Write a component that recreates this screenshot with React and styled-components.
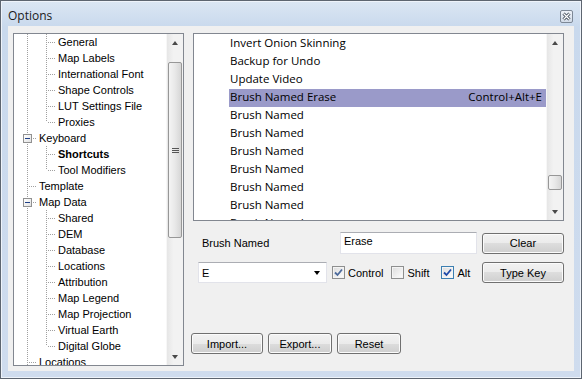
import React from "react";
import styled, { createGlobalStyle, css } from "styled-components";

const GlobalStyle = createGlobalStyle`
  html, body {
    margin: 0;
    padding: 0;
    background: #ffffff;
  }
  body {
    font-family: "Liberation Sans", Arial, sans-serif;
    font-size: 11px;
    color: #000;
  }
`;

const Window = styled.div`
  width: 582px;
  height: 379px;
  box-sizing: border-box;
  border: 1px solid #5d6570;
  background: linear-gradient(to bottom, #dbe6f3 0px, #c9d9ed 26px, #cfdcee 100%);
  box-shadow: inset 1px 1px 0 #eef3fa, inset -1px -1px 0 #eef3fa;
  display: flex;
  flex-direction: column;
  padding: 0 7px 7px 7px;
`;

const TitleBar = styled.div`
  height: 25px;
  display: flex;
  align-items: center;
  justify-content: space-between;
  padding-right: 1px;
`;

const Title = styled.span`
  font-family: "Open Sans", "Noto Sans", sans-serif;
  font-size: 12px;
  color: #1b1b1b;
  padding-top: 4px;
`;

const CloseBox = styled.div`
  width: 13px;
  height: 13px;
  box-sizing: border-box;
  border: 1px solid #7d8896;
  border-radius: 2px;
  background: linear-gradient(to bottom, #eef2f8, #d3dce8);
  display: flex;
  align-items: center;
  justify-content: center;
  margin-top: 6px;
`;

const Client = styled.div`
  flex: 1;
  background: #f0f0f0;
  display: flex;
  padding: 7px 10px 5px 5px;
  gap: 9px;
  min-height: 0;
`;

const TreeBox = styled.div`
  width: 171px;
  box-sizing: border-box;
  border: 1px solid #828790;
  background: #fff;
  display: flex;
  overflow: hidden;
`;

const TreeBody = styled.div`
  flex: 1;
  padding: 0 0 0 4px;
  overflow: hidden;
`;

const TreeRow = styled.div`
  height: 16px;
  display: flex;
  align-items: center;
  white-space: nowrap;
`;

const dots = "#a0a0a0";

const Guide = styled.span`
  position: relative;
  width: 19px;
  height: 16px;
  flex: none;

  ${({ $v }) =>
    $v &&
    css`
      &::before {
        content: "";
        position: absolute;
        left: 9px;
        top: 0;
        width: 1px;
        height: ${$v === "half" ? "8px" : "16px"};
        background-image: linear-gradient(to bottom, ${dots} 50%, transparent 50%);
        background-size: 1px 2px;
      }
    `}

  ${({ $h }) =>
    $h &&
    css`
      &::after {
        content: "";
        position: absolute;
        left: 10px;
        top: 8px;
        width: 9px;
        height: 1px;
        background-image: linear-gradient(to right, transparent 50%, ${dots} 50%);
        background-size: 2px 1px;
      }
    `}
`;

const ExpandBox = styled.span`
  position: absolute;
  left: 5px;
  top: 4px;
  width: 9px;
  height: 9px;
  box-sizing: border-box;
  border: 1px solid #919191;
  background: linear-gradient(to bottom right, #ffffff, #e2e2e2);
  z-index: 1;

  &::after {
    content: "";
    position: absolute;
    left: 1px;
    top: 3px;
    width: 5px;
    height: 1px;
    background: #1f3f86;
  }
`;

const TreeText = styled.span`
  padding-left: 2px;
  font-weight: ${({ $bold }) => ($bold ? "bold" : "normal")};
`;

const ScrollBar = styled.div`
  width: 17px;
  flex: none;
  display: flex;
  flex-direction: column;
  background: linear-gradient(to right, #e6e6e6, #f2f2f2 40%, #f2f2f2);
  border-left: 1px solid #f7f7f7;
  box-sizing: border-box;
`;

const ArrowBtn = styled.div`
  height: 17px;
  flex: none;
  display: flex;
  align-items: center;
  justify-content: center;

  &::after {
    content: "";
    width: 0;
    height: 0;
    border-left: 3.5px solid transparent;
    border-right: 3.5px solid transparent;
    ${({ $down }) =>
      $down
        ? css`border-top: 4px solid #4a4a4a;`
        : css`border-bottom: 4px solid #4a4a4a;`}
  }
`;

const Track = styled.div`
  flex: 1;
  display: flex;
  flex-direction: column;
  padding: 0 1px;
`;

const Thumb = styled.div`
  flex: none;
  margin-top: ${({ $top }) => $top}px;
  height: ${({ $size }) => $size}px;
  box-sizing: border-box;
  border: 1px solid #979797;
  border-radius: 2px;
  background: linear-gradient(to right, #f4f4f4, #e8e8e8 50%, #d6d6d6);
  display: flex;
  align-items: center;
  justify-content: center;
`;

const Grip = styled.span`
  width: 7px;
  height: 5px;
  background-image: linear-gradient(to bottom, #555 1px, transparent 1px);
  background-size: 7px 2px;
`;

const RightPane = styled.div`
  flex: 1;
  display: flex;
  flex-direction: column;
  padding-bottom: 12px;
`;

const ListBox = styled.div`
  height: 188px;
  flex: none;
  box-sizing: border-box;
  border: 1px solid #828790;
  background: #fff;
  display: flex;
  overflow: hidden;
`;

const ListBody = styled.div`
  flex: 1;
  padding: 1px 0 0 35px;
  overflow: hidden;
`;

const ListRow = styled.div`
  height: 18px;
  box-sizing: border-box;
  display: flex;
  align-items: center;
  justify-content: space-between;
  padding: 0 4px 4px 1px;
  font-family: "Open Sans", "Noto Sans", sans-serif;
  font-size: 11.5px;
  white-space: nowrap;
  background: ${({ $selected }) => ($selected ? "#9a9ac9" : "transparent")};
`;

const FormRow = styled.div`
  display: flex;
  align-items: center;
  margin-top: ${({ $mt }) => $mt}px;
  padding-left: ${({ $pl }) => $pl || 0}px;
  gap: ${({ $gap }) => $gap || 0}px;
`;

const ButtonRow = styled.div`
  display: flex;
  align-items: center;
  gap: 5px;
  margin-top: auto;
  margin-left: -2px;
`;

const Label = styled.span`
  flex: 1;
`;

const TextInput = styled.div`
  width: 137px;
  height: 22px;
  box-sizing: border-box;
  border: 1px solid #e2e3ea;
  border-top-color: #abadb3;
  background: #fff;
  padding: 2px 3px;
  margin-right: 5px;
`;

const Button = styled.div`
  width: ${({ $w }) => $w || 82}px;
  height: 21px;
  box-sizing: border-box;
  border: 1px solid #707070;
  border-radius: 3px;
  background: linear-gradient(to bottom, #f2f2f2 0%, #ebebeb 50%, #dddddd 50%, #cfcfcf 100%);
  box-shadow: inset 0 0 0 1px #fbfbfb;
  display: flex;
  align-items: center;
  justify-content: center;
  margin-left: ${({ $auto }) => ($auto ? "auto" : "0")};
`;

const Combo = styled.div`
  width: 129px;
  height: 21px;
  box-sizing: border-box;
  border: 1px solid #e2e3ea;
  border-top-color: #abadb3;
  background: #fff;
  display: flex;
  align-items: center;
  justify-content: space-between;
  padding: 0 6px 0 3px;
  margin-right: 5px;

  &::after {
    content: "";
    border-left: 3.5px solid transparent;
    border-right: 3.5px solid transparent;
    border-top: 4px solid #000;
  }
`;

const Check = styled.span`
  display: flex;
  align-items: center;
  gap: 3px;
  margin-right: ${({ $mr }) => $mr}px;
`;

const Box = styled.span`
  width: 13px;
  height: 13px;
  box-sizing: border-box;
  border: 1px solid ${({ $focus }) => ($focus ? "#3c7fb1" : "#8e8f8f")};
  background: linear-gradient(to bottom right, #dcdcdc, #fefefe);
  box-shadow: inset 0 0 0 1px #f4f4f4;
  display: flex;
  align-items: center;
  justify-content: center;
`;

const CheckMark = ({ color }) => (
  <svg width="9" height="9" viewBox="0 0 9 9">
    <path d="M1 4.5 L3.5 7 L8 1.5" fill="none" stroke={color} strokeWidth="1.8" />
  </svg>
);

const treeRows = [
  { g: [["full"], ["full", true]], t: "General" },
  { g: [["full"], ["full", true]], t: "Map Labels" },
  { g: [["full"], ["full", true]], t: "International Font" },
  { g: [["full"], ["full", true]], t: "Shape Controls" },
  { g: [["full"], ["full", true]], t: "LUT Settings File" },
  { g: [["full"], ["half", true]], t: "Proxies" },
  { g: [["full", true, true]], t: "Keyboard" },
  { g: [["full"], ["full", true]], t: "Shortcuts", bold: true },
  { g: [["full"], ["half", true]], t: "Tool Modifiers" },
  { g: [["full", true]], t: "Template" },
  { g: [["full", true, true]], t: "Map Data" },
  { g: [["full"], ["full", true]], t: "Shared" },
  { g: [["full"], ["full", true]], t: "DEM" },
  { g: [["full"], ["full", true]], t: "Database" },
  { g: [["full"], ["full", true]], t: "Locations" },
  { g: [["full"], ["full", true]], t: "Attribution" },
  { g: [["full"], ["full", true]], t: "Map Legend" },
  { g: [["full"], ["full", true]], t: "Map Projection" },
  { g: [["full"], ["full", true]], t: "Virtual Earth" },
  { g: [["full"], ["half", true]], t: "Digital Globe" },
  { g: [["full", true]], t: "Locations" },
];

const listRows = [
  { t: "Invert Onion Skinning" },
  { t: "Backup for Undo" },
  { t: "Update Video" },
  { t: "Brush Named Erase", k: "Control+Alt+E", sel: true },
  { t: "Brush Named" },
  { t: "Brush Named" },
  { t: "Brush Named" },
  { t: "Brush Named" },
  { t: "Brush Named" },
  { t: "Brush Named" },
  { t: "Brush Named" },
];

const App = () => {
  return (
    <>
      <GlobalStyle />
      <Window>
        <TitleBar>
          <Title>Options</Title>
          <CloseBox>
            <svg width="9" height="9" viewBox="0 0 9 9">
              <path d="M1.5 1.5 L7.5 7.5 M7.5 1.5 L1.5 7.5" stroke="#3d4754" strokeWidth="3" />
              <path d="M1.5 1.5 L7.5 7.5 M7.5 1.5 L1.5 7.5" stroke="#ffffff" strokeWidth="1.2" />
            </svg>
          </CloseBox>
        </TitleBar>
        <Client>
          <TreeBox>
            <TreeBody>
              {treeRows.map((r, i) => (
                <TreeRow key={i}>
                  {r.g.map(([v, h, box], j) => (
                    <Guide key={j} $v={v} $h={h}>
                      {box && <ExpandBox />}
                    </Guide>
                  ))}
                  <TreeText $bold={r.bold}>{r.t}</TreeText>
                </TreeRow>
              ))}
            </TreeBody>
            <ScrollBar>
              <ArrowBtn />
              <Track>
                <Thumb $top={11} $size={176}>
                  <Grip />
                </Thumb>
              </Track>
              <ArrowBtn $down />
            </ScrollBar>
          </TreeBox>
          <RightPane>
            <ListBox>
              <ListBody>
                {listRows.map((r, i) => (
                  <ListRow key={i} $selected={r.sel}>
                    <span>{r.t}</span>
                    {r.k && <span>{r.k}</span>}
                  </ListRow>
                ))}
              </ListBody>
              <ScrollBar>
                <ArrowBtn />
                <Track>
                  <Thumb $top={124} $size={15} />
                </Track>
                <ArrowBtn $down />
              </ScrollBar>
            </ListBox>
            <FormRow $mt={11} $pl={9}>
              <Label>Brush Named</Label>
              <TextInput>Erase</TextInput>
              <Button>Clear</Button>
            </FormRow>
            <FormRow $mt={8} $pl={5}>
              <Combo>E</Combo>
              <Check $mr={8}>
                <Box>
                  <CheckMark color="#4c6a9c" />
                </Box>
                Control
              </Check>
              <Check $mr={12}>
                <Box />
                Shift
              </Check>
              <Check $mr={0}>
                <Box $focus>
                  <CheckMark color="#1f4aa8" />
                </Box>
                Alt
              </Check>
              <Button $auto>Type Key</Button>
            </FormRow>
            <ButtonRow>
              <Button $w={72}>Import...</Button>
              <Button $w={64}>Export...</Button>
              <Button $w={64}>Reset</Button>
            </ButtonRow>
          </RightPane>
        </Client>
      </Window>
    </>
  );
};

export default App;
